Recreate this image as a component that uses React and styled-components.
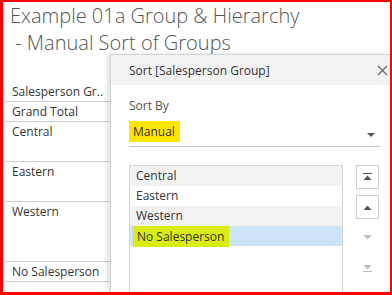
import React from "react"
import styled, { createGlobalStyle } from 'styled-components'

const Global = createGlobalStyle`
  body {
    margin: 0;
    font-family: "Open Sans", "Liberation Sans", sans-serif;
    background: #fff;
  }
`

const Frame = styled.div`
  width: 392px;
  height: 295px;
  box-sizing: border-box;
  border-style: solid;
  border-color: #f00;
  border-width: 2px 2px 3px 3px;
  background: #fff;
  overflow: hidden;
  display: flex;
  flex-direction: column;
`

const Title = styled.div`
  height: 52px;
  padding: 0 0 0 7px;
  color: #555;
  font-size: 20px;
  font-weight: 300;
  line-height: 27px;
  white-space: pre;
  flex-shrink: 0;
`

const Body = styled.div`
  flex: 1;
  display: flex;
  min-height: 0;
`

const Table = styled.div`
  width: 105px;
  padding: 28px 0 0 2px;
  flex-shrink: 0;
`

const Row = styled.div`
  height: ${p => p.h}px;
  box-sizing: border-box;
  border-bottom: 1px solid #cfcfcf;
  padding: 1px 0 0 7px;
  font-size: 12px;
  line-height: 18px;
  color: #333;
  white-space: nowrap;
  overflow: hidden;
`

const Dialog = styled.div`
  flex: 1;
  border-left: 1px solid #d6d6d6;
  border-top: 1px solid #d6d6d6;
  box-shadow: -3px 0 5px rgba(0,0,0,.12);
  background: #fff;
  display: flex;
  flex-direction: column;
`

const DialogHead = styled.div`
  height: 30px;
  background: #f2f2f2;
  display: flex;
  align-items: center;
  justify-content: space-between;
  padding: 0 2px 0 18px;
  font-size: 12px;
  color: #333;
`

const Close = styled.svg`
  width: 11px;
  height: 11px;
`

const DialogBody = styled.div`
  padding: 12px 10px 0 18px;
  flex: 1;
  display: flex;
  flex-direction: column;
`

const Label = styled.div`
  font-size: 12px;
  line-height: 18px;
  color: #555;
`

const Select = styled.div`
  height: 25px;
  margin-top: 6px;
  border-bottom: 1px solid #c6c6c6;
  display: flex;
  align-items: flex-start;
  justify-content: space-between;
  padding-right: 5px;
`

const Mark = styled.span`
  background: ${p => p.c};
  padding: 1px 5px 0 4px;
  height: 20px;
  line-height: 20px;
  font-size: 12px;
  color: #333;
`

const Caret = styled.div`
  margin-top: 12px;
  width: 0;
  height: 0;
  border-left: 4px solid transparent;
  border-right: 4px solid transparent;
  border-top: 4px solid #555;
`

const ListArea = styled.div`
  margin-top: 18px;
  flex: 1;
  display: flex;
  gap: 13px;
`

const List = styled.div`
  width: 214px;
  box-sizing: border-box;
  border: 1px solid #d4d4d4;
  border-bottom: none;
`

const Item = styled.div`
  height: 20px;
  background: ${p => p.bg};
  padding-left: ${p => p.mark ? 3 : 6}px;
  font-size: 12px;
  line-height: 20px;
  color: #333;
  display: flex;
  align-items: center;
`

const Buttons = styled.div`
  display: flex;
  flex-direction: column;
  gap: 6px;
`

const Btn = styled.div`
  width: 23px;
  height: 24px;
  box-sizing: border-box;
  border: ${p => p.off ? 'none' : '1px solid #ccc'};
  display: flex;
  align-items: center;
  justify-content: center;
`

const Arrow = ({ dir, bar, color }) => (
  <svg width="11" height="11" viewBox="0 0 11 11">
    {dir === 'up'
      ? <polygon points="1.5,8 9.5,8 5.5,3.5" fill={color} />
      : <polygon points="1.5,3 9.5,3 5.5,7.5" fill={color} />}
    {bar && (dir === 'up'
      ? <rect x="1" y="1" width="9" height="1" fill={color} />
      : <rect x="1" y="9" width="9" height="1" fill={color} />)}
  </svg>
)

const rows = [
  ['Salesperson Gr..', 20],
  ['Grand Total', 20],
  ['Central', 40],
  ['Eastern', 40],
  ['Western', 60],
  ['No Salesperson', 20],
]

export default function App() {
  return (
    <Frame>
      <Global />
      <Title>{'Example 01a Group & Hierarchy\n - Manual Sort of Groups'}</Title>
      <Body>
        <Table>
          {rows.map(([t, h]) => <Row key={t} h={h}>{t}</Row>)}
        </Table>
        <Dialog>
          <DialogHead>
            <span>Sort [Salesperson Group]</span>
            <Close viewBox="0 0 11 11">
              <path d="M1 1L10 10M10 1L1 10" stroke="#666" strokeWidth="1.2" />
            </Close>
          </DialogHead>
          <DialogBody>
            <Label>Sort By</Label>
            <Select>
              <Mark c="#ffe600">Manual</Mark>
              <Caret />
            </Select>
            <ListArea>
              <List>
                <Item bg="#f2f2f2">Central</Item>
                <Item bg="#fff">Eastern</Item>
                <Item bg="#f2f2f2">Western</Item>
                <Item bg="#cde3f6" mark><Mark c="#d9ec14">No Salesperson</Mark></Item>
              </List>
              <Buttons>
                <Btn><Arrow dir="up" bar color="#555" /></Btn>
                <Btn><Arrow dir="up" color="#555" /></Btn>
                <Btn off><Arrow dir="down" color="#bbb" /></Btn>
                <Btn off><Arrow dir="down" bar color="#bbb" /></Btn>
              </Buttons>
            </ListArea>
          </DialogBody>
        </Dialog>
      </Body>
    </Frame>
  )
}
